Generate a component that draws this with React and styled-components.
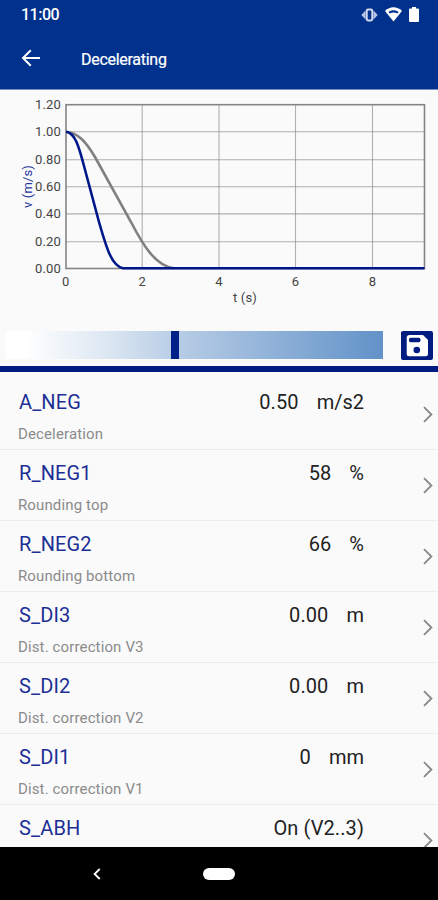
import React from 'react'
import styled, { createGlobalStyle } from 'styled-components'

const params = [
    { name: 'A_NEG', info: 'Deceleration', value: '0.50', unit: 'm/s2' },
    { name: 'R_NEG1', info: 'Rounding top', value: '58', unit: '%' },
    { name: 'R_NEG2', info: 'Rounding bottom', value: '66', unit: '%' },
    { name: 'S_DI3', info: 'Dist. correction V3', value: '0.00', unit: 'm' },
    { name: 'S_DI2', info: 'Dist. correction V2', value: '0.00', unit: 'm' },
    { name: 'S_DI1', info: 'Dist. correction V1', value: '0', unit: 'mm' },
    { name: 'S_ABH', value: 'On (V2..3)' },
]

const yTicks = [
    ['1.20', 104.7],
    ['1.00', 131.7],
    ['0.80', 159.7],
    ['0.60', 186.7],
    ['0.40', 213.9],
    ['0.20', 241.7],
    ['0.00', 268.5],
]

const xTicks = [
    ['0', 65.7],
    ['2', 142.2],
    ['4', 219],
    ['6', 295.5],
    ['8', 372.5],
]

function SpeedChart() {
    return (
        <Chart viewBox="0 90 438 226">
            {yTicks.slice(1, 6).map(([label, y]) => (
                <GridLine key={label} x1="66" x2="424" y1={y} y2={y} />
            ))}
            {xTicks.slice(1).map(([label, x]) => (
                <GridLine key={label} x1={x} x2={x} y1="105" y2="268" />
            ))}
            <Frame x="66" y="104.7" width="358.5" height="163.8" />
            <Curve $color="#808080" d="M66 131.7 C78 132.5 86 142 95 157 L131 222 C144 247 156 266 174 268.3" />
            <Curve $color="#00178a" d="M66 131.7 C75 132.5 79 147 84 166 L99 222 C107 250 112 266 123 268.3 L424.5 268.3" />
            {yTicks.map(([label, y]) => (
                <Tick key={label} x="61" y={y + 4.4} textAnchor="end">{label}</Tick>
            ))}
            {xTicks.map(([label, x]) => (
                <Tick key={label} x={x} y="285.7" textAnchor="middle">{label}</Tick>
            ))}
            <Tick x="245" y="302" textAnchor="middle">t (s)</Tick>
            <AxisName transform="translate(32 186.5) rotate(-90)" textAnchor="middle">v (m/s)</AxisName>
        </Chart>
    )
}

export default function App() {
    return (
        <>
            <GlobalStyle />
            <Screen>
                <Header>
                    <StatusBar>
                        <Clock>11:00</Clock>
                        <StatusIcons>
                            <svg width="17" height="14" viewBox="0 0 17 14">
                                <path d="M0.3 7 L4.5 2.5 V11.5 Z M16.7 7 L12.5 2.5 V11.5 Z" fill="#b9c6e6" />
                                <rect x="5.7" y="1.6" width="5.6" height="10.8" rx="1.4" fill="none" stroke="#d3dbf0" strokeWidth="2" />
                            </svg>
                            <svg width="17" height="15" viewBox="0 0 17 15">
                                <path d="M8.5 14.5 L0 4 C5 -1 12 -1 17 4 Z" fill="#fff" />
                                <path d="M3.4 5 C6.5 2.7 10.5 2.7 13.6 5 L12.3 6.6 C10 5.2 7 5.2 4.7 6.6 Z" fill="#00318c" />
                            </svg>
                            <svg width="10" height="15" viewBox="0 0 10 15">
                                <path d="M3 0 H7 V1.6 H9 Q10 1.6 10 2.6 V14 Q10 15 9 15 H1 Q0 15 0 14 V2.6 Q0 1.6 1 1.6 H3 Z" fill="#fff" />
                            </svg>
                        </StatusIcons>
                    </StatusBar>
                    <TitleBar>
                        <BackIcon viewBox="0 0 20 18">
                            <path d="M19 9 H2 M9.8 1.2 L2 9 L9.8 16.8" />
                        </BackIcon>
                        <Title>Decelerating</Title>
                    </TitleBar>
                </Header>
                <SpeedChart />
                <SliderRow>
                    <Slider>
                        <Thumb />
                    </Slider>
                    <SaveButton aria-label="Save">
                        <svg width="32" height="29" viewBox="0 0 32 29">
                            <path d="M8.5 4 H22 L27 9 V23 Q27 25.3 24.7 25.3 H8 Q5.7 25.3 5.7 23 V6.8 Q5.7 4 8.5 4 Z" fill="#fff" />
                            <rect x="8" y="6.8" width="11.5" height="4.4" rx="1.6" fill="#001c80" />
                            <circle cx="15.8" cy="19" r="3.3" fill="#001c80" />
                        </svg>
                    </SaveButton>
                </SliderRow>
                <Divider />
                <List>
                    {params.map((p) => (
                        <Item key={p.name}>
                            <ItemText>
                                <ItemTop>
                                    <Name>{p.name}</Name>
                                    <Value>{p.value}</Value>
                                    {p.unit && <Unit>{p.unit}</Unit>}
                                </ItemTop>
                                {p.info && <Info>{p.info}</Info>}
                            </ItemText>
                            <Chevron viewBox="0 0 10 17">
                                <path d="M1 1.2 L8.4 8.5 L1 15.8" />
                            </Chevron>
                        </Item>
                    ))}
                </List>
                <NavBar>
                    <NavBack viewBox="0 0 8 12">
                        <path d="M6.7 1 L1.6 6 L6.7 11" />
                    </NavBack>
                    <HomePill />
                    <span />
                </NavBar>
            </Screen>
        </>
    )
}

const GlobalStyle = createGlobalStyle`
    body {
        margin: 0;
        background: #fafafb;
        font-family: Roboto, "Liberation Sans", sans-serif;
    }
`;
const Screen = styled.div`
    display: flex;
    flex-direction: column;
    width: 438px;
    height: 900px;
    overflow: hidden;
    background: #fafafb;
`;
const Header = styled.header`
    height: 90px;
    box-sizing: border-box;
    background: #00318c;
    color: #fff;
    border-bottom: 1px solid #7c8fc4;
`;
const StatusBar = styled.div`
    display: flex;
    justify-content: space-between;
    align-items: center;
    height: 29px;
    padding: 0 19px 0 21px;
`;
const Clock = styled.span`
    font-size: 16px;
    font-weight: 500;
    letter-spacing: -0.5px;
`;
const StatusIcons = styled.div`
    display: flex;
    align-items: center;
    gap: 7px;
`;
const TitleBar = styled.div`
    display: flex;
    align-items: center;
    height: 60px;
    padding-left: 21px;
`;
const BackIcon = styled.svg`
    width: 20px;
    height: 18px;
    margin-right: 40px;
    margin-top: -3px;
    fill: none;
    stroke: #fff;
    stroke-width: 2;
`;
const Title = styled.h1`
    margin: 0;
    font-size: 16px;
    font-weight: 400;
    letter-spacing: -0.28px;
    -webkit-text-stroke: 0.2px #fff;
`;
const Chart = styled.svg`
    display: block;
    width: 438px;
    height: 226px;
    flex: none;
`;
const GridLine = styled.line`
    stroke: #888;
    stroke-opacity: 0.65;
    stroke-width: 1.1;
`;
const Frame = styled.rect`
    fill: none;
    stroke: #858585;
    stroke-width: 1.6;
`;
const Curve = styled.path`
    fill: none;
    stroke: ${(props) => props.$color};
    stroke-width: 2.6;
`;
const Tick = styled.text`
    font-size: 13px;
    letter-spacing: 0.15px;
    fill: #444;
`;
const AxisName = styled.text`
    font-size: 13px;
    letter-spacing: 0.15px;
    fill: #24369c;
`;
const SliderRow = styled.div`
    display: flex;
    justify-content: space-between;
    height: 50px;
    box-sizing: border-box;
    padding: 15px 5px 0 6px;
`;
const Slider = styled.div`
    width: 377px;
    height: 28px;
    box-sizing: border-box;
    padding-left: 165px;
    background: linear-gradient(to right, #fff 0%, #fff 5%, #dfe9f3 25%, #b8cde6 45%, #6292c8 100%);
`;
const Thumb = styled.div`
    width: 8px;
    height: 28px;
    background: #00218a;
`;
const SaveButton = styled.button`
    display: block;
    width: 32px;
    height: 29px;
    padding: 0;
    border: none;
    border-radius: 2px;
    background: #001c80;
`;
const Divider = styled.div`
    height: 6px;
    flex: none;
    background: #001c80;
`;
const List = styled.div`
    height: 475px;
    box-sizing: border-box;
    padding-top: 7px;
    overflow: hidden;
`;
const Item = styled.div`
    display: flex;
    align-items: center;
    justify-content: space-between;
    height: 71px;
    box-sizing: border-box;
    padding: 0 5px 0 18px;
    border-bottom: 1px solid #ededee;
`;
const ItemText = styled.div`
    width: 346px;
    height: 71px;
`;
const ItemTop = styled.div`
    display: flex;
    height: 45px;
    line-height: 46px;
    font-size: 20px;
    color: #222;
`;
const Name = styled.span`
    flex: 1;
    padding-left: 1px;
    letter-spacing: 0.15px;
    color: #1c2f94;
`;
const Value = styled.span`
    letter-spacing: 0.1px;
`;
const Unit = styled.span`
    margin-left: 18px;
`;
const Info = styled.div`
    line-height: 20px;
    font-size: 15px;
    letter-spacing: 0.13px;
    color: #8b8b8b;
`;
const Chevron = styled.svg`
    width: 10px;
    height: 17px;
    fill: none;
    stroke: #888;
    stroke-width: 1.8;
`;
const NavBar = styled.nav`
    display: grid;
    grid-template-columns: 1fr 32px 1fr;
    align-items: center;
    height: 53px;
    box-sizing: border-box;
    padding-top: 1px;
    background: #000;
`;
const NavBack = styled.svg`
    width: 8px;
    height: 12px;
    margin-left: 93px;
    fill: none;
    stroke: #fff;
    stroke-width: 1.8;
`;
const HomePill = styled.div`
    width: 32px;
    height: 12px;
    border-radius: 6px;
    background: #fff;
`;
